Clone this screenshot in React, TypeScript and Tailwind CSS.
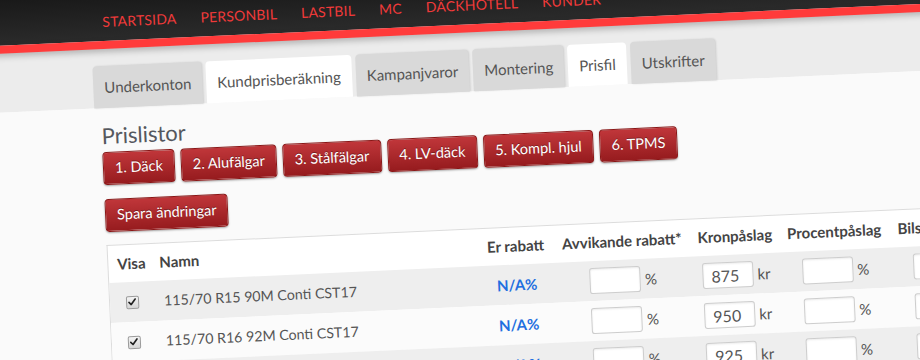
import React from 'react';

const navItems = ['Startsida', 'Personbil', 'Lastbil', 'MC', 'Däckhotell', 'Kunder'];

const tabs = [
  { label: 'Underkonton', active: false },
  { label: 'Kundprisberäkning', active: true },
  { label: 'Kampanjvaror', active: false },
  { label: 'Montering', active: false },
  { label: 'Prisfil', active: true },
  { label: 'Utskrifter', active: false },
];

const priceLists = ['1. Däck', '2. Alufälgar', '3. Stålfälgar', '4. LV-däck', '5. Kompl. hjul', '6. TPMS'];

const rows = [
  { name: '115/70 R15 90M Conti CST17', kr: '875' },
  { name: '115/70 R16 92M Conti CST17', kr: '950' },
  { name: '125/80 R15 95M Conti CST17', kr: '925' },
];

const cols = 'grid grid-cols-[44px_322px_83px_130px_96px_103px_1fr]';

const RedButton = ({ children }: { children: React.ReactNode }) => (
  <button className="h-[33px] px-[11px] rounded-[4px] border border-[#8a1717] bg-linear-to-b from-[#c0363a] to-[#961b1e] text-white text-[14.5px] leading-none shadow-[0_1px_2px_rgba(0,0,0,0.35)] [text-shadow:0_-1px_0_rgba(0,0,0,0.35)]">
    {children}
  </button>
);

const Field = ({ value, unit }: { value?: string; unit: string }) => (
  <div className="flex items-center justify-center gap-[4px]">
    <input
      readOnly
      value={value ?? ''}
      className="w-[51px] h-[26px] bg-white border border-[#cdcdcd] rounded-[3px] shadow-[inset_0_1px_2px_rgba(0,0,0,0.08)] pl-[8px] text-[16px] text-[#555] outline-none"
    />
    <span className="text-[15px] text-[#555]">{unit}</span>
  </div>
);

const Check = () => (
  <span className="w-[13px] h-[13px] rounded-[2px] border border-[#9a9a9a] bg-linear-to-b from-[#f4f4f4] to-[#d6d6d6] flex items-center justify-center">
    <svg viewBox="0 0 12 12" className="w-[10px] h-[10px]">
      <path d="M2.2 6.4 L4.8 9 L9.8 2.6" fill="none" stroke="#222" strokeWidth="2" strokeLinecap="round" strokeLinejoin="round" />
    </svg>
  </span>
);

export default function App() {
  return (
    <div className="w-[920px] h-[360px] overflow-hidden bg-[#fafafa] font-['Lato','Liberation_Sans',sans-serif]">
      <div className="w-[1080px] h-[480px] -ml-[80px] -mt-[58px] [transform:rotate(-2.6deg)] [transform-origin:540px_240px]">
        {/* Top navigation */}
        <div className="h-[83px] bg-linear-to-b from-[#0c0c0c] to-[#2b2b2b] flex items-end pl-[178px] pb-[12px]">
          {navItems.map((item) => (
            <a key={item} className="px-[12px] text-[14px] leading-[14px] uppercase text-[#f03a3a] tracking-[0.2px]">
              {item}
            </a>
          ))}
        </div>
        <div className="h-[8px] bg-[#ff3b3b] shadow-[0_3px_6px_rgba(0,0,0,0.25)] relative" />

        {/* Tabs */}
        <div className="h-[59px] bg-[#ececec] flex items-end pl-[178px] gap-[4px]">
          {tabs.map((t) => (
            <div
              key={t.label}
              className={
                t.active
                  ? 'h-[42px] px-[11px] flex items-center rounded-t-[4px] bg-white text-[15px] text-[#555]'
                  : 'h-[42px] px-[11px] flex items-center rounded-t-[4px] bg-[#d9d9d9] text-[15px] text-[#555] shadow-[1px_0_2px_rgba(0,0,0,0.12)]'
              }
            >
              {t.label}
            </div>
          ))}
        </div>

        {/* Content */}
        <div className="bg-[#fafafa] pl-[184px] pt-[14px]">
          <h2 className="text-[22px] leading-[28px] text-[#55585e]">Prislistor</h2>
          <div className="flex gap-[6px] mt-[2px]">
            {priceLists.map((p) => (
              <RedButton key={p}>{p}</RedButton>
            ))}
          </div>
          <div className="mt-[14px]">
            <RedButton>Spara ändringar</RedButton>
          </div>

          <div className="mt-[13px] border-l border-t border-[#dcdcdc] bg-white text-[15px] text-[#555]">
            <div className={`${cols} h-[37px] items-center font-bold text-[#444]`}>
              <div className="text-center pl-[2px]">Visa</div>
              <div className="pl-[7px]">Namn</div>
              <div className="text-center">Er rabatt</div>
              <div className="text-center">Avvikande rabatt*</div>
              <div className="text-center">Kronpåslag</div>
              <div className="text-center">Procentpåslag</div>
              <div className="pl-[12px]">Bilstöd</div>
            </div>
            {rows.map((r, i) => (
              <div key={r.name} className={`${cols} h-[40px] items-center ${i % 2 === 0 ? 'bg-[#eeeeee]' : 'bg-[#fbfbfb]'}`}>
                <div className="flex justify-center">
                  <Check />
                </div>
                <div className="pl-[10px] text-[14.2px]">{r.name}</div>
                <div className="text-center font-bold text-[#1f6fe0]">N/A%</div>
                <Field unit="%" />
                <Field value={r.kr} unit="kr" />
                <Field unit="%" />
                <div className="pl-[26px] flex">
                  <Field unit="kr" />
                </div>
              </div>
            ))}
          </div>
        </div>
      </div>
    </div>
  );
}
